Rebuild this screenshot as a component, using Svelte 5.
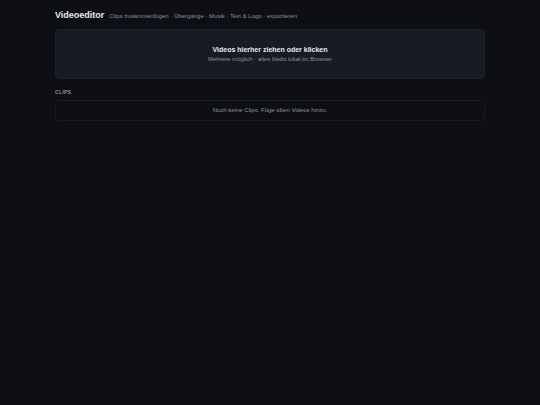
<script lang="ts">
  let clips: File[] = $state([]);
  let dragging = $state(false);

  function addFiles(files: FileList | null | undefined) {
    if (!files) return;
    clips.push(...Array.from(files).filter((file) => file.type.startsWith("video/")));
  }

  function onDrop(event: DragEvent) {
    event.preventDefault();
    dragging = false;
    addFiles(event.dataTransfer?.files);
  }
</script>

<main>
  <header>
    <h1>Videoeditor</h1>
    <p>Clips zusammenfügen · Übergänge · Musik · Text &amp; Logo · exportieren</p>
  </header>

  <label
    class="dropzone"
    class:dragging
    ondragover={(event) => { event.preventDefault(); dragging = true; }}
    ondragleave={() => (dragging = false)}
    ondrop={onDrop}
  >
    <input type="file" accept="video/*" multiple onchange={(event) => addFiles(event.currentTarget.files)} />
    <strong>Videos hierher ziehen oder klicken</strong>
    <span>Mehrere möglich · alles bleibt lokal im Browser</span>
  </label>

  <section>
    <h2>Clips</h2>
    {#if clips.length}
      <ul>
        {#each clips as clip}
          <li>{clip.name}</li>
        {/each}
      </ul>
    {:else}
      <div class="empty">Noch keine Clips. Füge oben Videos hinzu.</div>
    {/if}
  </section>
</main>

<style>
  :global(body) { background: #0e0f14; }
  main { box-sizing: border-box; max-width: 446px; margin: 0 auto; padding: 10px 8px; color: #e8eaf0; font: 6px/7px "Liberation Sans", Arial, sans-serif; }
  header { display: flex; align-items: baseline; gap: 5px; margin-bottom: 8px; }
  h1 { margin: 0; font-size: 9px; line-height: 11px; }
  p { margin: 0; color: #8b8fa0; }
  .dropzone { position: relative; display: flex; flex-direction: column; align-items: center; gap: 2px; padding: 15px 8px; border: 1px dotted #282c36; border-radius: 5px; background: #161b24; cursor: pointer; }
  .dropzone.dragging { border-color: #6b7cff; }
  .dropzone:focus-within { border-color: #6b7cff; }
  .dropzone input { position: absolute; inset: 0; opacity: 0; pointer-events: none; }
  .dropzone strong { font-size: 7px; line-height: 9px; }
  .dropzone span { color: #8b8fa0; }
  section { margin-top: 10px; }
  h2 { margin: 0 0 4px; color: #8b8fa0; font-size: 5px; line-height: 7px; letter-spacing: .06em; text-transform: uppercase; }
  .empty { padding: 6px; border: 1px dotted #25282f; border-radius: 4px; color: #8b8fa0; text-align: center; }
  ul { margin: 0; padding: 0; list-style: none; }
  li { padding: 4px 6px; border: 1px solid #252a34; border-radius: 4px; }
  li + li { margin-top: 4px; }
</style>
